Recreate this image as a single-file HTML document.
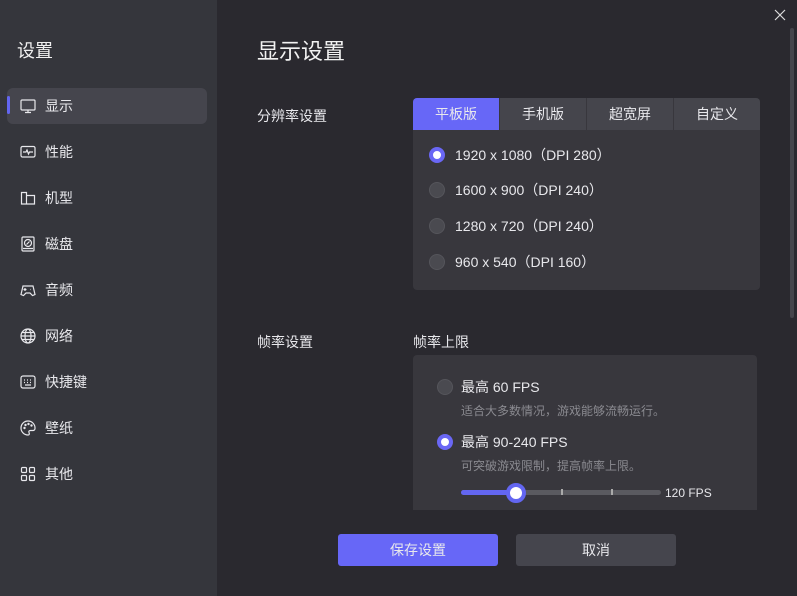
<!DOCTYPE html>
<html><head><meta charset="utf-8"><style>
*{margin:0;padding:0;box-sizing:border-box}
body{width:797px;height:596px;background:#2a292f;font-family:"Liberation Sans","Noto Sans CJK SC",sans-serif;color:#e8e8ec;position:relative;overflow:hidden;font-size:14px}
.side{position:absolute;left:0;top:0;width:217px;height:596px;background:#35363c}
.side h1{position:absolute;left:17px;top:37px;font-size:18px;font-weight:normal;color:#f0f0f0}
.item{position:absolute;left:7px;width:200px;height:36px;display:flex;align-items:center;font-size:14px}
.item svg{position:absolute;left:13px;top:10px}
.item span{position:absolute;left:38px}
.item.act{background:#45454d;border-radius:6px}
.item.act:before{content:"";position:absolute;left:0;top:8px;width:3px;height:18px;background:#6366f1;border-radius:2px}
.t{position:absolute;white-space:nowrap}
.panel{position:absolute;background:#38373d;border-radius:4px}
.tab{position:absolute;top:98px;height:32px;background:#45454c;text-align:center;line-height:32px;font-size:14px}
.radio{position:absolute;width:16px;height:16px;border-radius:50%;background:#4a4a50;border:1px solid #55555b}
.radio.on{background:#fff;border:4px solid #6a67f5}
.sub{color:#8a8a90;font-size:12px}
</style></head><body>
<div class="side">
<h1>设置</h1>
<div class="item act" style="top:88px"><svg width="16" height="16" viewBox="0 0 16 16" fill="none" stroke="#e8e8ec" stroke-width="1.2"><rect x="1" y="2" width="14" height="10" rx="1"/><path d="M8 12v2M5 14.5h6"/></svg><span>显示</span></div>
<div class="item" style="top:134px"><svg width="16" height="16" viewBox="0 0 16 16" fill="none" stroke="#e8e8ec" stroke-width="1.2"><rect x="1" y="2.5" width="14" height="10.5" rx="1.5"/><path d="M3 8h3l1-2 1.5 4 1-2H13"/></svg><span>性能</span></div>
<div class="item" style="top:180px"><svg width="16" height="16" viewBox="0 0 16 16" fill="none" stroke="#e8e8ec" stroke-width="1.2"><path d="M1.5 2.5h5v3h8v8.5h-13z M6.5 5.5v8.5"/></svg><span>机型</span></div>
<div class="item" style="top:226px"><svg width="16" height="16" viewBox="0 0 16 16" fill="none" stroke="#e8e8ec" stroke-width="1.2"><rect x="2" y="1" width="12" height="14" rx="1"/><circle cx="8" cy="7" r="3.5"/><path d="M6.5 8.5l3-3M3 12.5h10"/></svg><span>磁盘</span></div>
<div class="item" style="top:272px"><svg width="16" height="16" viewBox="0 0 16 16" fill="none" stroke="#e8e8ec" stroke-width="1.2"><path d="M3 4h10l2 8.5-2.5 1L10 11H6l-2.5 2.5L1 12.5z M5 6v3M3.5 7.5h3M10.5 7.5h.5"/></svg><span>音频</span></div>
<div class="item" style="top:318px"><svg width="16" height="16" viewBox="0 0 16 16" fill="none" stroke="#e8e8ec" stroke-width="1.2"><circle cx="8" cy="8" r="7"/><ellipse cx="8" cy="8" rx="3" ry="7"/><path d="M1 8h14M2 4.5h12M2 11.5h12"/></svg><span>网络</span></div>
<div class="item" style="top:364px"><svg width="16" height="16" viewBox="0 0 16 16" fill="none" stroke="#e8e8ec" stroke-width="1.2"><rect x="1" y="2" width="14" height="12" rx="2"/><path d="M4 6h1M7 6h1M10 6h1M4 8.5h1M7 8.5h1M10 8.5h1M5 11h6"/></svg><span>快捷键</span></div>
<div class="item" style="top:410px"><svg width="16" height="16" viewBox="0 0 16 16" fill="none" stroke="#e8e8ec" stroke-width="1.2"><path d="M8 1a7 7 0 1 0 0 14c1.5 0 1.5-1.5 1-2.5s0-2 1.5-2H13a2 2 0 0 0 2-2A7 7 0 0 0 8 1z"/><circle cx="4.5" cy="8" r=".6"/><circle cx="5.5" cy="5" r=".6"/><circle cx="8.5" cy="4" r=".6"/><circle cx="11.5" cy="5.5" r=".6"/></svg><span>壁纸</span></div>
<div class="item" style="top:456px"><svg width="16" height="16" viewBox="0 0 16 16" fill="none" stroke="#e8e8ec" stroke-width="1.2"><rect x="1.5" y="1.5" width="5" height="5" rx="1"/><rect x="9.5" y="1.5" width="5" height="5" rx="1"/><rect x="1.5" y="9.5" width="5" height="5" rx="1"/><rect x="9.5" y="9.5" width="5" height="5" rx="1"/></svg><span>其他</span></div>
</div>
<svg style="position:absolute;left:774px;top:9px" width="12" height="12" viewBox="0 0 12 12" stroke="#ddd" stroke-width="1.2"><path d="M1 1l10 10M11 1L1 11"/></svg>
<div style="position:absolute;left:790px;top:28px;width:4px;height:290px;background:#45454b;border-radius:2px"></div>
<div class="t" style="left:257px;top:34px;font-size:22px;color:#f2f2f2">显示设置</div>
<div class="t" style="left:257px;top:106px">分辨率设置</div>
<div class="panel" style="left:413px;top:98px;width:347px;height:192px"></div>
<div class="tab" style="left:413px;width:86px;background:#6767f7;border-radius:4px 0 0 0">平板版</div>
<div class="tab" style="left:500px;width:86px">手机版</div>
<div class="tab" style="left:587px;width:86px">超宽屏</div>
<div class="tab" style="left:674px;width:86px;border-radius:0 4px 0 0">自定义</div>
<div class="radio on" style="left:429px;top:147px"></div><div class="t" style="left:455px;top:145px">1920 x 1080（DPI 280）</div>
<div class="radio" style="left:429px;top:182px"></div><div class="t" style="left:455px;top:180px">1600 x 900（DPI 240）</div>
<div class="radio" style="left:429px;top:218px"></div><div class="t" style="left:455px;top:216px">1280 x 720（DPI 240）</div>
<div class="radio" style="left:429px;top:254px"></div><div class="t" style="left:455px;top:252px">960 x 540（DPI 160）</div>
<div class="t" style="left:257px;top:332px">帧率设置</div>
<div class="t" style="left:413px;top:332px">帧率上限</div>
<div class="panel" style="left:413px;top:355px;width:344px;height:155px;border-radius:4px 4px 0 0"></div>
<div class="radio" style="left:437px;top:379px"></div><div class="t" style="left:461px;top:377px">最高 60 FPS</div>
<div class="t sub" style="left:461px;top:402px">适合大多数情况，游戏能够流畅运行。</div>
<div class="radio on" style="left:437px;top:434px"></div><div class="t" style="left:461px;top:432px">最高 90-240 FPS</div>
<div class="t sub" style="left:461px;top:457px">可突破游戏限制，提高帧率上限。</div>
<div style="position:absolute;left:461px;top:490px;width:200px;height:5px;background:#5a5a60;border-radius:3px"></div>
<div style="position:absolute;left:461px;top:490px;width:55px;height:5px;background:#6366f1;border-radius:3px"></div>
<div style="position:absolute;left:561px;top:489px;width:2px;height:6px;background:#aaa"></div>
<div style="position:absolute;left:611px;top:489px;width:2px;height:6px;background:#aaa"></div>
<div style="position:absolute;left:506px;top:483px;width:20px;height:20px;border-radius:50%;background:#fff;border:4px solid #6366f1"></div>
<div class="t" style="left:665px;top:486px;font-size:12px">120 FPS</div>
<div style="position:absolute;left:338px;top:534px;width:160px;height:32px;background:#6767f7;border-radius:3px;text-align:center;line-height:32px">保存设置</div>
<div style="position:absolute;left:516px;top:534px;width:160px;height:32px;background:#45454d;border-radius:3px;text-align:center;line-height:32px">取消</div>
</body></html>
